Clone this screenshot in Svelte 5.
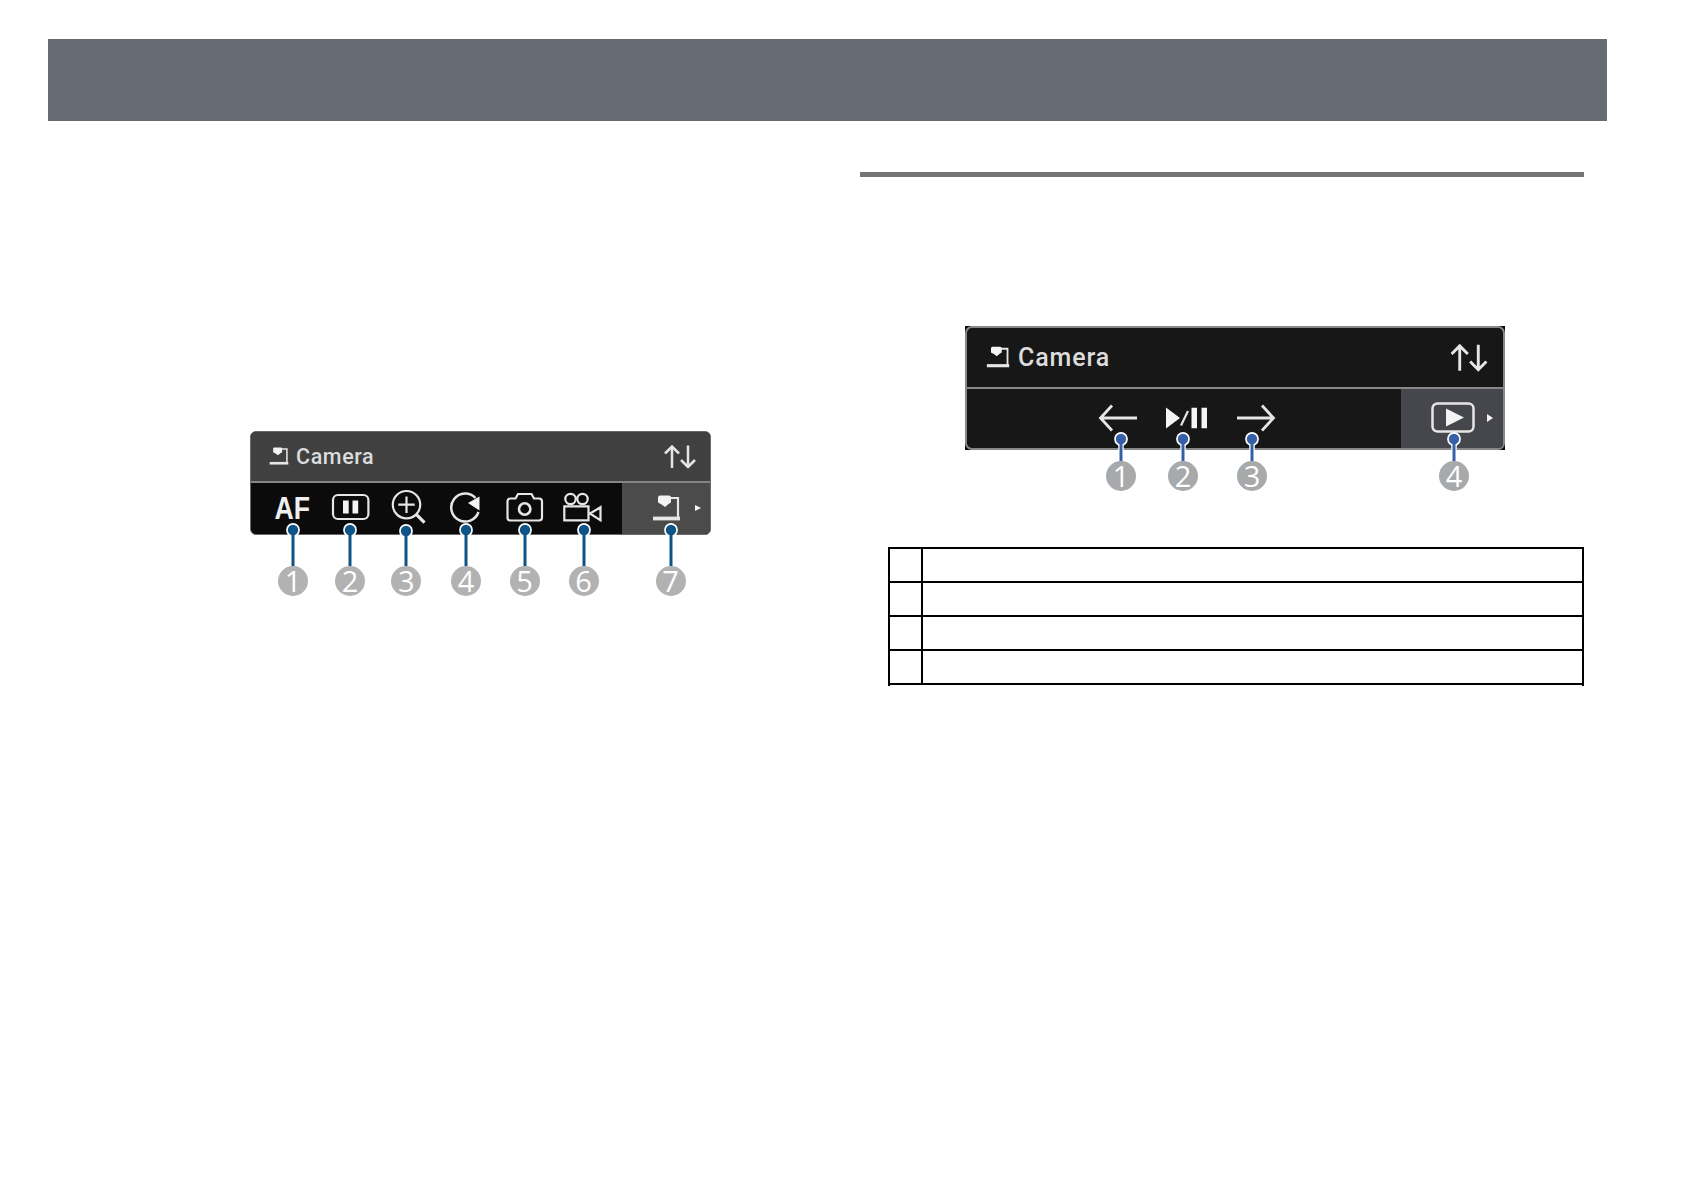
<script lang="ts">
  type Callout = { x: number; label: string; y?: number };

  const liveCallouts: Callout[] = [
    { x: 43, label: "1" },
    { x: 100, label: "2" },
    { x: 156.3, label: "3", y: 1 },
    { x: 216, label: "4" },
    { x: 274.5, label: "5" },
    { x: 333.5, label: "6" },
    { x: 420.5, label: "7" },
  ];

  const playCallouts: Callout[] = [
    { x: 155, label: "1" },
    { x: 217, label: "2" },
    { x: 286, label: "3" },
    { x: 488, label: "4" },
  ];

  const rows = [1, 2, 3, 4];
</script>

{#snippet stand()}
  <path d="M0 23.5h27" stroke-width="3.8" />
  <path d="M12 3h13v20" stroke-width="2.2" />
  <path d="M5 2.500Q5 .5 7 .5h9q2 0 2 2v5L15.500 9 12 12 8.500 9.500 5 7.500z" class="solid" stroke="none" />
{/snippet}

{#snippet swap()}
  <path d="M8 24V3M1 9.500 8 2.500 15 9.500M24 1.500v21M17 16l7 7 7-7" stroke-width="2.500" />
{/snippet}

{#snippet callouts(items: Callout[], height: number)}
  {#each items as { x, label, y = 0 }}
    <div class="callout" style:left="{x}px">
      <svg width="16" {height} viewBox="0 0 16 {height}">
        <path d="M8 {8 + y}v{height}" class="halo" />
        <circle cx="8" cy={8 + y} r="6.900" class="ring" />
        <path d="M8 {8 + y}v{height}" class="line" />
        <circle cx="8" cy={8 + y} r="5.200" class="dot" />
      </svg>
      <span class="number">{label}</span>
    </div>
  {/each}
{/snippet}

<div class="page">
  <header class="banner"></header>

  <main>
    <section class="left">
      <div class="panel live">
        <div class="title">
          <svg class="logo" viewBox="-1 0 29 26">{@render stand()}</svg>
          <span>Camera</span>
          <svg class="swap" viewBox="0 0 32 25">{@render swap()}</svg>
        </div>
        <div class="tools">
          <svg viewBox="0 0 58 50">
            <text x="11.500" y="34.500" textLength="35.500" lengthAdjust="spacingAndGlyphs">AF</text>
          </svg>
          <svg viewBox="0 0 58 50">
            <rect x="12" y="11" width="35.400" height="24" rx="5" />
            <path d="M22 16.500h5.700v13H22zM31.500 16.500h5.700v13h-5.700z" class="solid" stroke="none" />
          </svg>
          <svg viewBox="0 0 58 50">
            <circle cx="27.500" cy="20.700" r="13.700" />
            <path d="M27.500 12.500v16.400M19.300 20.700h16.400" />
            <path d="M37 30.200l8.500 8.500" stroke-width="3.200" />
          </svg>
          <svg viewBox="0 0 58 50">
            <path d="M38.500 14A14 14 0 1 0 41.500 28" stroke-width="2.500" />
            <path d="M31 19 42.500 12.500v14z" class="solid" stroke="none" />
          </svg>
          <svg viewBox="0 0 58 50">
            <path d="M15 14.500h5.500l2.500-4.500h13.500l2.500 4.500H44q3 0 3 3v16q0 3-3 3H15.500q-3 0-3-3v-16q0-3 3-3z" />
            <circle cx="29.700" cy="25" r="5.700" stroke-width="2.600" />
          </svg>
          <svg viewBox="0 0 58 50">
            <circle cx="17.500" cy="15" r="5.200" />
            <circle cx="29.500" cy="15" r="5.200" />
            <path d="M11.300 22.300h24.200v14H11.300zM37 29.500l10.500-6.200v13z" />
          </svg>
          <div class="active">
            <svg class="big-stand" viewBox="-1 0 29 26">{@render stand()}</svg>
            <svg class="more" viewBox="0 0 6 6"><path d="M0 0l6 3-6 3z" class="solid" stroke="none" /></svg>
          </div>
        </div>
        {@render callouts(liveCallouts, 44)}
      </div>
    </section>

    <section class="right">
      <hr />
      <div class="backing">
        <div class="panel play">
          <div class="title">
            <svg class="logo" viewBox="-1 0 29 26">{@render stand()}</svg>
            <span>Camera</span>
            <svg class="swap" viewBox="0 0 32 25">{@render swap()}</svg>
          </div>
          <div class="tools">
            <svg class="arrow" viewBox="0 0 40 28">
              <path d="M39 14H3M14 1.500 2.500 14 14 26.500" />
            </svg>
            <svg class="toggle" viewBox="0 0 42 22">
              <path d="M0 .5 14 11 0 21.500zM25.500.8H31v20.400h-5.500zM35.500.8H41v20.400h-5.500z" class="solid" stroke="none" />
              <path d="M15 18.500 22 4" />
            </svg>
            <svg class="arrow" viewBox="0 0 40 28">
              <path d="M1 14h36M26 1.500 37.500 14 26 26.500" />
            </svg>
            <div class="active">
              <svg class="player" viewBox="0 0 44 31">
                <rect x="1.500" y="1.500" width="41" height="28" rx="5" stroke-width="2.500" />
                <path d="M15 6.500l18 9-18 9z" class="solid" stroke="none" />
              </svg>
              <svg class="more" viewBox="0 0 6 8"><path d="M0 0l6 4-6 4z" class="solid" stroke="none" /></svg>
            </div>
          </div>
          {@render callouts(playCallouts, 30)}
        </div>
      </div>

      <div class="legend">
        <table>
          <tbody>
            {#each rows as row (row)}
              <tr><td class="key"></td><td></td></tr>
            {/each}
          </tbody>
        </table>
      </div>
    </section>
  </main>
</div>

<style>
  :global(body) {
    background: #fff;
  }

  .page {
    box-sizing: border-box;
    width: 1684px;
    height: 1190px;
    padding-top: 39px;
    overflow: hidden;
    font-family: Roboto, "Liberation Sans", sans-serif;
  }

  .banner {
    height: 82px;
    margin: 0 77px 0 48px;
    background: #676b73;
  }

  main {
    display: grid;
    grid-template-columns: 860px 724px;
  }

  .left {
    padding: 310px 0 0 250px;
  }

  .right {
    padding-top: 51px;
  }

  hr {
    height: 5px;
    margin: 0;
    border: 0;
    background: #757575;
  }

  svg {
    display: block;
    flex: none;
    fill: none;
    stroke: #e6e6e6;
    stroke-width: 2.2;
  }

  .solid {
    fill: #f4f4f4;
  }

  .panel {
    position: relative;
    box-sizing: border-box;
    display: flex;
    flex-direction: column;
  }

  .title,
  .tools,
  .active {
    display: flex;
    align-items: center;
  }

  .title {
    box-sizing: border-box;
    color: #dcdcdc;
    font-weight: 500;
  }

  .swap {
    margin-left: auto;
  }

  .live {
    width: 461px;
    height: 104px;
    border: 1px solid #6a6a6a;
    border-radius: 6px;
    background: #0b0b0b;
  }

  .live .title {
    height: 51px;
    padding: 0 14px 1px 18px;
    border-bottom: 2px solid #858585;
    border-radius: 5px 5px 0 0;
    background: #404040;
    font-size: 21.5px;
    letter-spacing: 0.6px;
  }

  .live .logo {
    width: 20px;
    height: 18px;
    margin-right: 7px;
  }

  .live .swap {
    width: 32px;
    height: 25px;
  }

  .live .tools {
    height: 51px;
    padding-left: 12px;
  }

  .live .tools > svg {
    width: 58px;
    height: 50px;
  }

  .live text {
    fill: #efefef;
    stroke: none;
    font: 700 32px "Liberation Sans", sans-serif;
  }

  .active {
    box-sizing: border-box;
    align-self: stretch;
    margin-left: auto;
  }

  .live .active {
    width: 88px;
    padding: 0 9px 2px 30px;
    border-radius: 0 0 5px 0;
    background: #4b4b4b;
  }

  .big-stand {
    width: 29px;
    height: 26px;
  }

  .more {
    width: 6px;
    height: 6px;
    margin-left: auto;
  }

  .backing {
    width: 540px;
    margin: 149px 0 0 105px;
    background: #0a0a0a;
  }

  .play {
    width: 540px;
    height: 124px;
    border: 2px solid #888;
    border-radius: 7px;
    background: #171717;
  }

  .play .title {
    height: 61px;
    padding: 0 15px 1px 19px;
    border-bottom: 2px solid #888;
    font-size: 25px;
    letter-spacing: 0.9px;
  }

  .play .logo {
    width: 24px;
    height: 22px;
    margin-right: 8px;
  }

  .play .swap {
    width: 38px;
    height: 29px;
  }

  .play .tools {
    height: 59px;
    padding-left: 131px;
  }

  .play .tools > svg {
    margin-bottom: 2px;
  }

  .arrow {
    width: 40px;
    height: 28px;
    stroke-width: 2.8;
  }

  .toggle {
    width: 42px;
    height: 22px;
    margin: 0 28px 0 28px;
  }

  .play .active {
    width: 102px;
    padding: 0 10px 2px 30px;
    border-radius: 0 0 4px 0;
    background: #46474d;
  }

  .player {
    width: 44px;
    height: 31px;
  }

  .play .more {
    height: 8px;
  }

  .callout {
    --ink: #0f5486;
    position: absolute;
    top: 90px;
    width: 30px;
    margin-left: -16px;
    display: flex;
    flex-direction: column;
    align-items: center;
  }

  .play .callout {
    --ink: #3560a8;
    top: 103px;
  }

  .halo {
    stroke: #fff;
    stroke-width: 5.5;
  }

  .ring {
    fill: #fff;
    stroke: none;
  }

  .line {
    stroke: var(--ink);
    stroke-width: 3;
  }

  .dot {
    fill: var(--ink);
    stroke: none;
  }

  .number {
    width: 30px;
    height: 30px;
    border-radius: 50%;
    background: #b2b2b2;
    color: #fff;
    font: 29px/30px "Open Sans", sans-serif;
    text-align: center;
  }

  .play .number {
    background: #a7a9ab;
  }

  .legend {
    box-sizing: border-box;
    width: 696px;
    margin: 97px 0 0 28px;
    padding-bottom: 1px;
    border: solid #000;
    border-width: 0 2px;
  }

  table {
    width: 696px;
    margin: 0 -2px;
    border-collapse: collapse;
    table-layout: fixed;
  }

  td {
    height: 32px;
    padding: 0;
    border: 2px solid #000;
  }

  .key {
    width: 31px;
  }
</style>
